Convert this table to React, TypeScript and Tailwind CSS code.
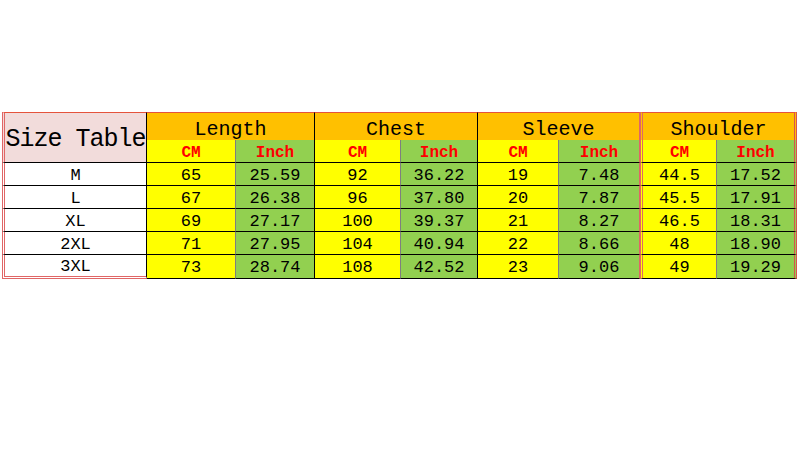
import React from 'react';

const rows = [
  { size: 'M', v: ['65', '25.59', '92', '36.22', '19', '7.48', '44.5', '17.52'] },
  { size: 'L', v: ['67', '26.38', '96', '37.80', '20', '7.87', '45.5', '17.91'] },
  { size: 'XL', v: ['69', '27.17', '100', '39.37', '21', '8.27', '46.5', '18.31'] },
  { size: '2XL', v: ['71', '27.95', '104', '40.94', '22', '8.66', '48', '18.90'] },
  { size: '3XL', v: ['73', '28.74', '108', '42.52', '23', '9.06', '49', '19.29'] },
];

const groups = ['Length', 'Chest', 'Sleeve', 'Shoulder'];

// right/left borders per column; the Shoulder pair is framed in red
const colBorder = [
  'bg-[#ffff00] border-r border-r-[#7f7f7f]',
  'bg-[#92d050] border-r border-r-black',
  'bg-[#ffff00] border-r border-r-[#7f7f7f]',
  'bg-[#92d050] border-r border-r-black',
  'bg-[#ffff00] border-r border-r-[#7f7f7f]',
  'bg-[#92d050] border-r border-r-[#e06666]',
  'bg-[#ffff00] border-r border-r-[#7f7f7f] border-l-[3px] border-l-[#e06666] [border-left-style:double]',
  'bg-[#92d050] border-r-[3px] border-r-[#d9534f] [border-right-style:double]',
];

export default function App() {
  return (
    <div className="w-[800px] h-[450px] bg-white pt-[112px] pl-[2px]" style={{ fontFamily: '"Liberation Mono", "DejaVu Sans Mono", monospace' }}>
      <div className="grid grid-cols-[145px_89px_79px_86px_77px_81px_81px_77px_80px] grid-rows-[28px_23px_23px_23px_23px_23px_24px] w-[795px] text-black">
        {/* header */}
        <div className="row-span-2 col-start-1 row-start-1 bg-[#f2dcdb] border-t border-t-[#e5533c] border-l-[3px] border-l-[#e06666] [border-left-style:double] border-r border-r-black border-b border-b-black flex items-center justify-center text-[25px] leading-none tracking-[-1px] pt-[3px]">
          Size Table
        </div>
        {groups.map((g, i) => (
          <div
            key={g}
            className={`col-span-2 row-start-1 bg-[#ffc000] border-t border-t-[#e5533c] flex items-center justify-center text-[20px] leading-none pt-[6px] ${
              i === 3
                ? 'border-l-[3px] border-l-[#e06666] [border-left-style:double] border-r-[3px] border-r-[#d9534f] [border-right-style:double]'
                : i === 2
                ? 'border-r border-r-[#e06666]'
                : 'border-r border-r-black'
            }`}
          >
            {g}
          </div>
        ))}
        {groups.flatMap((g, i) =>
          ['CM', 'Inch'].map((u, j) => (
            <div
              key={g + u}
              className={`row-start-2 flex items-center justify-center text-[16px] font-bold text-[#ff0000] leading-none pt-[4px] border-b border-b-black ${colBorder[i * 2 + j]}`}
            >
              {u}
            </div>
          ))
        )}

        {/* body */}
        {rows.map((r, ri) => (
          <React.Fragment key={r.size}>
            <div
              className={`bg-white border-l-[3px] border-l-[#e06666] [border-left-style:double] border-r border-r-black flex items-center justify-center text-[17px] leading-none pt-[2px] ${
                ri === rows.length - 1 ? 'border-b-[3px] border-b-[#e06666] [border-bottom-style:double]' : 'border-b border-b-black'
              }`}
            >
              {r.size}
            </div>
            {r.v.map((v, c) => (
              <div
                key={c}
                className={`flex items-center justify-center text-[17px] leading-none pt-[2px] border-b border-b-black ${colBorder[c]}`}
              >
                {v}
              </div>
            ))}
          </React.Fragment>
        ))}
      </div>
    </div>
  );
}
